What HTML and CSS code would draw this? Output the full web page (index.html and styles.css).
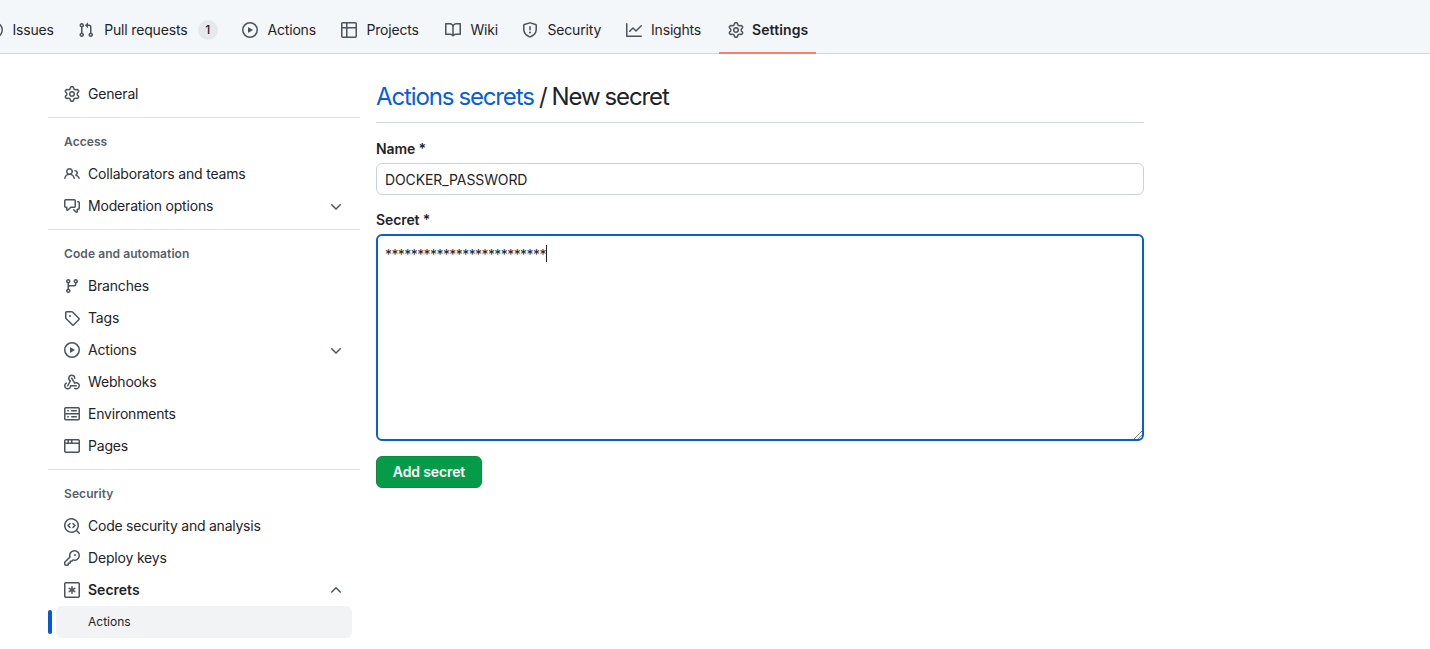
FILE: index.html
```html
<!DOCTYPE html>
<html lang="en">
<head>
<meta charset="utf-8">
<title>Actions secrets / New secret</title>
<link rel="stylesheet" href="styles.css">
</head>
<body>
<svg class="sprite" aria-hidden="true">
  <symbol id="issue" viewBox="0 0 16 16"><path d="M8 9.5a1.5 1.5 0 1 0 0-3 1.5 1.5 0 0 0 0 3Z"/><path d="M8 0a8 8 0 1 1 0 16A8 8 0 0 1 8 0ZM1.5 8a6.5 6.5 0 1 0 13 0 6.5 6.5 0 0 0-13 0Z"/></symbol>
  <symbol id="pull" viewBox="0 0 16 16"><path d="M1.5 3.25a2.25 2.25 0 1 1 3 2.122v5.256a2.251 2.251 0 1 1-1.5 0V5.372A2.25 2.25 0 0 1 1.5 3.25Zm5.677-.177L9.573.677A.25.25 0 0 1 10 .854V2.5h1A2.5 2.5 0 0 1 13.5 5v5.628a2.251 2.251 0 1 1-1.5 0V5a1 1 0 0 0-1-1h-1v1.646a.25.25 0 0 1-.427.177L7.177 3.427a.25.25 0 0 1 0-.354ZM3.75 2.5a.75.75 0 1 0 0 1.5.75.75 0 0 0 0-1.5Zm0 9.5a.75.75 0 1 0 0 1.5.75.75 0 0 0 0-1.5Zm8.25.75a.75.75 0 1 0 1.5 0 .75.75 0 0 0-1.5 0Z"/></symbol>
  <symbol id="play" viewBox="0 0 16 16"><path d="M8 0a8 8 0 1 1 0 16A8 8 0 0 1 8 0ZM1.5 8a6.5 6.5 0 1 0 13 0 6.5 6.5 0 0 0-13 0Zm4.879-2.773 4.264 2.559a.25.25 0 0 1 0 .428l-4.264 2.559A.25.25 0 0 1 6 10.559V5.442a.25.25 0 0 1 .379-.215Z"/></symbol>
  <symbol id="table" viewBox="0 0 16 16"><path d="M0 1.75C0 .784.784 0 1.75 0h12.5C15.216 0 16 .784 16 1.75v12.5A1.75 1.75 0 0 1 14.25 16H1.75A1.75 1.75 0 0 1 0 14.25ZM6.5 6.5v8h7.75a.25.25 0 0 0 .25-.25V6.5Zm8-1.5V1.75a.25.25 0 0 0-.25-.25H6.5V5Zm-13 1.5v7.75c0 .138.112.25.25.25H5v-8ZM5 5V1.5H1.75a.25.25 0 0 0-.25.25V5Z"/></symbol>
  <symbol id="book" viewBox="0 0 16 16"><path d="M0 1.75A.75.75 0 0 1 .75 1h4.253c1.227 0 2.317.59 3 1.501A3.743 3.743 0 0 1 11.006 1h4.245a.75.75 0 0 1 .75.75v10.5a.75.75 0 0 1-.75.75h-4.507a2.25 2.25 0 0 0-1.591.659l-.622.621a.75.75 0 0 1-1.06 0l-.622-.621A2.25 2.25 0 0 0 5.258 13H.75a.75.75 0 0 1-.75-.75Zm7.251 10.324.004-5.073-.002-2.253A2.25 2.25 0 0 0 5.003 2.5H1.5v9h3.757a3.75 3.75 0 0 1 1.994.574ZM8.755 4.75l-.004 7.322a3.752 3.752 0 0 1 1.992-.572H14.5v-9h-3.495a2.25 2.25 0 0 0-2.25 2.25Z"/></symbol>
  <symbol id="shield" viewBox="0 0 16 16"><path d="m8.533.133 5.25 1.68A1.75 1.75 0 0 1 15 3.48V7c0 1.566-.32 3.182-1.303 4.682-.983 1.498-2.585 2.813-5.032 3.855a1.697 1.697 0 0 1-1.33 0c-2.447-1.042-4.049-2.357-5.032-3.855C1.32 10.182 1 8.566 1 7V3.48a1.75 1.75 0 0 1 1.217-1.667l5.25-1.68a1.748 1.748 0 0 1 1.066 0Zm-.61 1.429.001.001-5.25 1.68a.251.251 0 0 0-.174.237V7c0 1.36.275 2.666 1.057 3.859.784 1.194 2.121 2.342 4.366 3.298a.196.196 0 0 0 .154 0c2.245-.957 3.582-2.103 4.366-3.297C13.225 9.666 13.5 8.358 13.5 7V3.48a.25.25 0 0 0-.174-.238l-5.25-1.68a.25.25 0 0 0-.153 0ZM8.75 4.75v3a.75.75 0 0 1-1.5 0v-3a.75.75 0 0 1 1.5 0ZM9 10.5a1 1 0 1 1-2 0 1 1 0 0 1 2 0Z"/></symbol>
  <symbol id="graph" viewBox="0 0 16 16"><path d="M1.5 1.75V13.5h13.75a.75.75 0 0 1 0 1.5H.75a.75.75 0 0 1-.75-.75V1.75a.75.75 0 0 1 1.5 0Zm14.28 2.53-5.25 5.25a.75.75 0 0 1-1.06 0L7 7.06 4.28 9.78a.751.751 0 0 1-1.042-.018.751.751 0 0 1-.018-1.042l3.25-3.25a.75.75 0 0 1 1.06 0L10 7.94l4.72-4.72a.751.751 0 0 1 1.042.018.751.751 0 0 1 .018 1.042Z"/></symbol>
  <symbol id="gear" viewBox="0 0 16 16"><path d="M8 0a8.2 8.2 0 0 1 .701.031C9.444.095 9.99.645 10.16 1.29l.288 1.107c.018.066.079.158.212.224.231.114.454.243.668.386.123.082.233.09.299.071l1.103-.303c.644-.176 1.392.021 1.82.63.27.385.506.792.704 1.218.315.675.111 1.422-.364 1.891l-.814.806c-.049.048-.098.147-.088.294.016.257.016.515 0 .772-.01.147.038.246.088.294l.814.806c.475.469.679 1.216.364 1.891a7.977 7.977 0 0 1-.704 1.217c-.428.61-1.176.807-1.82.63l-1.102-.302c-.067-.019-.177-.011-.3.071a5.909 5.909 0 0 1-.668.386c-.133.066-.194.158-.211.224l-.29 1.106c-.168.646-.715 1.196-1.458 1.26a8.006 8.006 0 0 1-1.402 0c-.743-.064-1.289-.614-1.458-1.26l-.289-1.106c-.018-.066-.079-.158-.212-.224a5.738 5.738 0 0 1-.668-.386c-.123-.082-.233-.09-.299-.071l-1.103.303c-.644.176-1.392-.021-1.82-.63a8.12 8.12 0 0 1-.704-1.218c-.315-.675-.111-1.422.363-1.891l.815-.806c.05-.048.098-.147.088-.294a6.214 6.214 0 0 1 0-.772c.01-.147-.038-.246-.088-.294l-.815-.806C.635 6.045.431 5.298.746 4.623a7.92 7.92 0 0 1 .704-1.217c.428-.61 1.176-.807 1.82-.63l1.102.302c.067.019.177.011.3-.071.214-.143.437-.272.668-.386.133-.066.194-.158.211-.224l.29-1.106C6.009.645 6.556.095 7.299.03 7.53.01 7.764 0 8 0Zm-.571 1.525c-.036.003-.108.036-.137.146l-.289 1.105c-.147.561-.549.967-.998 1.189-.173.086-.34.183-.5.29-.417.278-.97.423-1.529.27l-1.103-.303c-.109-.03-.175.016-.195.045-.22.312-.412.644-.573.99-.014.031-.021.11.059.19l.815.806c.411.406.562.957.53 1.456a4.709 4.709 0 0 0 0 .582c.032.499-.119 1.05-.53 1.456l-.815.806c-.081.08-.073.159-.059.19.162.346.353.677.573.989.02.03.085.076.195.046l1.102-.303c.56-.153 1.113-.008 1.53.27.161.107.328.204.501.29.447.222.85.629.997 1.189l.289 1.105c.029.109.101.143.137.146a6.6 6.6 0 0 0 1.142 0c.036-.003.108-.036.137-.146l.289-1.105c.147-.561.549-.967.998-1.189.173-.086.34-.183.5-.29.417-.278.97-.423 1.529-.27l1.103.303c.109.029.175-.016.195-.045.22-.313.411-.644.573-.99.014-.031.021-.11-.059-.19l-.815-.806c-.411-.406-.562-.957-.53-1.456a4.709 4.709 0 0 0 0-.582c-.032-.499.119-1.05.53-1.456l.815-.806c.081-.08.073-.159.059-.19a6.464 6.464 0 0 0-.573-.989c-.02-.03-.085-.076-.195-.046l-1.102.303c-.56.153-1.113.008-1.53-.27a4.44 4.44 0 0 0-.501-.29c-.447-.222-.85-.629-.997-1.189l-.289-1.105c-.029-.11-.101-.143-.137-.146a6.6 6.6 0 0 0-1.142 0ZM11 8a3 3 0 1 1-6 0 3 3 0 0 1 6 0ZM9.5 8a1.5 1.5 0 1 0-3.001.001A1.5 1.5 0 0 0 9.5 8Z"/></symbol>
  <symbol id="people" viewBox="0 0 16 16"><path d="M2 5.5a3.5 3.5 0 1 1 5.898 2.549 5.508 5.508 0 0 1 3.034 4.084.75.75 0 1 1-1.482.235 4 4 0 0 0-7.9 0 .75.75 0 0 1-1.482-.236A5.507 5.507 0 0 1 3.102 8.05 3.493 3.493 0 0 1 2 5.5ZM11 4a3.001 3.001 0 0 1 2.22 5.018 5.01 5.01 0 0 1 2.56 3.012.749.749 0 0 1-.885.954.752.752 0 0 1-.549-.514 3.507 3.507 0 0 0-2.522-2.372.75.75 0 0 1-.574-.73v-.352a.75.75 0 0 1 .416-.672A1.5 1.5 0 0 0 11 5.5.75.75 0 0 1 11 4Zm-5.5-.5a2 2 0 1 0-.001 3.999A2 2 0 0 0 5.5 3.5Z"/></symbol>
  <symbol id="comments" viewBox="0 0 16 16"><path d="M1.75 1h8.5c.966 0 1.75.784 1.75 1.75v5.5A1.75 1.75 0 0 1 10.25 10H7.061l-2.574 2.573A1.458 1.458 0 0 1 2 11.543V10h-.25A1.75 1.75 0 0 1 0 8.25v-5.5C0 1.784.784 1 1.75 1ZM1.5 2.75v5.5c0 .138.112.25.25.25h1a.75.75 0 0 1 .75.75v2.19l2.72-2.72a.749.749 0 0 1 .53-.22h3.5a.25.25 0 0 0 .25-.25v-5.5a.25.25 0 0 0-.25-.25h-8.5a.25.25 0 0 0-.25.25Zm13 2a.25.25 0 0 0-.25-.25h-.5a.75.75 0 0 1 0-1.5h.5c.966 0 1.75.784 1.75 1.75v5.5A1.75 1.75 0 0 1 14.25 12H14v1.543a1.458 1.458 0 0 1-2.487 1.03L9.22 12.28a.749.749 0 0 1 .326-1.275.749.749 0 0 1 .734.215l2.22 2.22v-2.19a.75.75 0 0 1 .75-.75h1a.25.25 0 0 0 .25-.25Z"/></symbol>
  <symbol id="branch" viewBox="0 0 16 16"><path d="M9.5 3.25a2.25 2.25 0 1 1 3 2.122V6A2.5 2.5 0 0 1 10 8.5H6a1 1 0 0 0-1 1v1.128a2.251 2.251 0 1 1-1.5 0V5.372a2.25 2.25 0 1 1 1.5 0v1.836A2.493 2.493 0 0 1 6 7h4a1 1 0 0 0 1-1v-.628A2.25 2.25 0 0 1 9.5 3.25Zm-6 0a.75.75 0 1 0 1.5 0 .75.75 0 0 0-1.5 0Zm8.25-.75a.75.75 0 1 0 0 1.5.75.75 0 0 0 0-1.5ZM4.25 12a.75.75 0 1 0 0 1.5.75.75 0 0 0 0-1.5Z"/></symbol>
  <symbol id="tag" viewBox="0 0 16 16"><path d="M1 7.775V2.75C1 1.784 1.784 1 2.75 1h5.025c.464 0 .91.184 1.238.513l6.25 6.25a1.75 1.75 0 0 1 0 2.474l-5.026 5.026a1.75 1.75 0 0 1-2.474 0l-6.25-6.25A1.752 1.752 0 0 1 1 7.775Zm1.5 0c0 .066.026.13.073.177l6.25 6.25a.25.25 0 0 0 .354 0l5.025-5.025a.25.25 0 0 0 0-.354l-6.25-6.25a.25.25 0 0 0-.177-.073H2.75a.25.25 0 0 0-.25.25ZM6 5a1 1 0 1 1 0 2 1 1 0 0 1 0-2Z"/></symbol>
  <symbol id="webhook" viewBox="0 0 16 16"><path d="M5.5 4.25a2.25 2.25 0 0 1 4.5 0 .75.75 0 0 0 1.5 0 3.75 3.75 0 1 0-6.14 2.889l-2.272 4.258a.75.75 0 0 0 1.324.706L7 7.25a.75.75 0 0 0-.309-1.015A2.25 2.25 0 0 1 5.5 4.25Z"/><path d="M7.364 3.607a.75.75 0 0 1 1.03.257l2.608 4.349a3.75 3.75 0 1 1-.628 6.785.75.75 0 0 1 .752-1.299 2.25 2.25 0 1 0-.033-3.88.75.75 0 0 1-1.03-.256L7.107 4.636a.75.75 0 0 1 .257-1.03Z"/><path d="M2.9 8.776A.75.75 0 0 1 2.625 9.8 2.25 2.25 0 1 0 6 11.75a.75.75 0 0 1 .75-.751h5.5a.75.75 0 0 1 0 1.5H7.425a3.751 3.751 0 1 1-5.55-3.998.75.75 0 0 1 1.024.274Z"/></symbol>
  <symbol id="server" viewBox="0 0 16 16"><path d="M1.75 1h12.5c.966 0 1.75.784 1.75 1.75v4c0 .372-.116.717-.314 1 .198.283.314.628.314 1v4a1.75 1.75 0 0 1-1.75 1.75H1.75A1.75 1.75 0 0 1 0 12.75v-4c0-.358.109-.707.314-1a1.739 1.739 0 0 1-.314-1v-4C0 1.784.784 1 1.75 1ZM1.5 2.75v4c0 .138.112.25.25.25h12.5a.25.25 0 0 0 .25-.25v-4a.25.25 0 0 0-.25-.25H1.75a.25.25 0 0 0-.25.25Zm.25 5.75a.25.25 0 0 0-.25.25v4c0 .138.112.25.25.25h12.5a.25.25 0 0 0 .25-.25v-4a.25.25 0 0 0-.25-.25ZM7 4.75A.75.75 0 0 1 7.75 4h4.5a.75.75 0 0 1 0 1.5h-4.5A.75.75 0 0 1 7 4.75ZM7.75 10h4.5a.75.75 0 0 1 0 1.5h-4.5a.75.75 0 0 1 0-1.5ZM3 4.75A.75.75 0 0 1 3.75 4h.5a.75.75 0 0 1 0 1.5h-.5A.75.75 0 0 1 3 4.75ZM3.75 10h.5a.75.75 0 0 1 0 1.5h-.5a.75.75 0 0 1 0-1.5Z"/></symbol>
  <symbol id="browser" viewBox="0 0 16 16"><path d="M0 2.75C0 1.784.784 1 1.75 1h12.5c.966 0 1.75.784 1.75 1.75v10.5A1.75 1.75 0 0 1 14.25 15H1.75A1.75 1.75 0 0 1 0 13.25ZM14.5 6h-13v7.25c0 .138.112.25.25.25h12.5a.25.25 0 0 0 .25-.25Zm-6-3.5v2h6V2.75a.25.25 0 0 0-.25-.25ZM5 2.5v2h2v-2Zm-3.25 0a.25.25 0 0 0-.25.25V4.5h2v-2Z"/></symbol>
  <symbol id="codescan" viewBox="0 0 16 16"><path d="M8.47 4.97a.75.75 0 0 0 0 1.06L9.94 7.5 8.47 8.97a.75.75 0 1 0 1.06 1.06l2-2a.75.75 0 0 0 0-1.06l-2-2a.75.75 0 0 0-1.06 0ZM6.53 6.03a.75.75 0 0 0-1.06-1.06l-2 2a.75.75 0 0 0 0 1.06l2 2a.75.75 0 1 0 1.06-1.06L5.06 7.5l1.47-1.47Z"/><path d="M12.246 13.307a7.501 7.501 0 1 1 1.06-1.06l2.474 2.473a.749.749 0 1 1-1.06 1.06ZM1.5 7.5a6.002 6.002 0 0 0 3.608 5.504 6.002 6.002 0 0 0 6.486-1.117.748.748 0 0 1 .292-.293A6 6 0 1 0 1.5 7.5Z"/></symbol>
  <symbol id="key" viewBox="0 0 16 16"><path d="M10.5 0a5.499 5.499 0 1 1-1.288 10.848l-.932.932a.749.749 0 0 1-.53.22H7v.75a.749.749 0 0 1-.22.53l-.5.5a.749.749 0 0 1-.53.22H5v.75a.749.749 0 0 1-.22.53l-.5.5a.749.749 0 0 1-.53.22h-2A1.75 1.75 0 0 1 0 14.25v-2c0-.199.079-.389.22-.53l4.932-4.932A5.5 5.5 0 0 1 10.5 0Zm-4 5.5c-.001.431.069.86.205 1.269a.75.75 0 0 1-.181.768L1.5 12.56v1.69c0 .138.112.25.25.25h1.69l.06-.06v-1.19a.75.75 0 0 1 .75-.75h1.19l.06-.06v-1.19a.75.75 0 0 1 .75-.75h1.19l1.023-1.025a.75.75 0 0 1 .768-.18A4 4 0 1 0 6.5 5.5ZM11 6a1 1 0 1 1 0-2 1 1 0 0 1 0 2Z"/></symbol>
  <symbol id="asterisk" viewBox="0 0 16 16"><path d="M0 1.75C0 .784.784 0 1.75 0h12.5C15.216 0 16 .784 16 1.75v12.5A1.75 1.75 0 0 1 14.25 16H1.75A1.75 1.75 0 0 1 0 14.25Zm1.75-.25a.25.25 0 0 0-.25.25v12.5c0 .138.112.25.25.25h12.5a.25.25 0 0 0 .25-.25V1.75a.25.25 0 0 0-.25-.25ZM8 4a.75.75 0 0 1 .75.75V6.7l1.69-.975a.75.75 0 0 1 .75 1.3L9.5 8l1.69.976a.75.75 0 0 1-.75 1.298L8.75 9.3v1.951a.75.75 0 0 1-1.5 0V9.299l-1.69.976a.75.75 0 0 1-.75-1.3L6.5 8l-1.69-.975a.75.75 0 0 1 .75-1.3l1.69.976V4.75A.75.75 0 0 1 8 4Z"/></symbol>
  <symbol id="down" viewBox="0 0 16 16"><path d="M12.78 5.22a.749.749 0 0 1 0 1.06l-4.25 4.25a.749.749 0 0 1-1.06 0L3.22 6.28a.749.749 0 1 1 1.06-1.06L8 8.939l3.72-3.719a.749.749 0 0 1 1.06 0Z"/></symbol>
  <symbol id="up" viewBox="0 0 16 16"><path d="M3.22 10.53a.749.749 0 0 1 0-1.06l4.25-4.25a.749.749 0 0 1 1.06 0l4.25 4.25a.749.749 0 1 1-1.06 1.06L8 6.811 4.28 10.53a.749.749 0 0 1-1.06 0Z"/></symbol>
</svg>
<header class="topbar">
  <nav class="tabs">
    <a class="tab"><svg class="icon"><use href="#issue"/></svg><span>Issues</span></a>
    <a class="tab tab-counted"><svg class="icon"><use href="#pull"/></svg><span>Pull requests</span><span class="counter">1</span></a>
    <a class="tab"><svg class="icon"><use href="#play"/></svg><span>Actions</span></a>
    <a class="tab"><svg class="icon"><use href="#table"/></svg><span>Projects</span></a>
    <a class="tab"><svg class="icon"><use href="#book"/></svg><span>Wiki</span></a>
    <a class="tab"><svg class="icon"><use href="#shield"/></svg><span>Security</span></a>
    <a class="tab"><svg class="icon"><use href="#graph"/></svg><span>Insights</span></a>
    <a class="tab tab-selected"><svg class="icon"><use href="#gear"/></svg><span>Settings</span></a>
  </nav>
</header>
<div class="layout">
  <aside class="sidebar">
    <section class="group">
      <a class="item"><svg class="icon"><use href="#gear"/></svg><span>General</span></a>
    </section>
    <section class="group">
      <h3 class="group-title">Access</h3>
      <a class="item"><svg class="icon"><use href="#people"/></svg><span>Collaborators and teams</span></a>
      <a class="item"><svg class="icon"><use href="#comments"/></svg><span>Moderation options</span><svg class="icon chevron"><use href="#down"/></svg></a>
    </section>
    <section class="group">
      <h3 class="group-title">Code and automation</h3>
      <a class="item"><svg class="icon"><use href="#branch"/></svg><span>Branches</span></a>
      <a class="item"><svg class="icon"><use href="#tag"/></svg><span>Tags</span></a>
      <a class="item"><svg class="icon"><use href="#play"/></svg><span>Actions</span><svg class="icon chevron"><use href="#down"/></svg></a>
      <a class="item"><svg class="icon"><use href="#webhook"/></svg><span>Webhooks</span></a>
      <a class="item"><svg class="icon"><use href="#server"/></svg><span>Environments</span></a>
      <a class="item"><svg class="icon"><use href="#browser"/></svg><span>Pages</span></a>
    </section>
    <section class="group">
      <h3 class="group-title">Security</h3>
      <a class="item item-long"><svg class="icon"><use href="#codescan"/></svg><span>Code security and analysis</span></a>
      <a class="item"><svg class="icon"><use href="#key"/></svg><span>Deploy keys</span></a>
      <a class="item item-open"><svg class="icon"><use href="#asterisk"/></svg><span>Secrets</span><svg class="icon chevron chevron-up"><use href="#up"/></svg></a>
      <div class="subrow"><span class="marker"></span><a class="subitem subitem-current">Actions</a></div>
      <div class="subrow"><a class="subitem">Dependabot</a></div>
    </section>
  </aside>
  <main class="content">
    <h2 class="title"><a class="title-link">Actions secrets</a> / New secret</h2>
    <div class="label">Name *</div>
    <div class="field">DOCKER_PASSWORD</div>
    <div class="label label-secret">Secret *</div>
    <div class="field field-area"><span class="mask">*************************</span><span class="caret"></span>
      <svg class="grip" viewBox="0 0 8 8"><path d="M0 8L8 0M4 8L8 4"/></svg>
    </div>
    <button class="submit">Add secret</button>
  </main>
</div>
</body>
</html>
```
FILE: styles.css
```css
* { box-sizing: border-box; }
body {
  margin: 0;
  height: 649px;
  overflow: hidden;
  background: #fff;
  color: #1f2328;
  font: 14px/20px Inter, "Liberation Sans", sans-serif;
  letter-spacing: -0.18px;
}
.sprite { display: none; }
.icon { width: 16px; height: 16px; flex: none; fill: #4b535d; }

.topbar {
  height: 54px;
  background: #f3f7fa;
  border-bottom: 1px solid #d0d7e0;
}
.tabs {
  display: grid;
  grid-template-columns: 91px 164px 99px 104px 77px 103.5px 101.9px 96.6px;
  margin-left: -21px;
  height: 54px;
}
.tab {
  display: flex;
  align-items: center;
  gap: 9.5px;
  padding: 6px 0 0 8px;
  white-space: nowrap;
}
.tab-counted { gap: 10.2px; letter-spacing: -0.16px; }
.tab-selected {
  font-weight: 600;
  gap: 8px;
  border-bottom: 2px solid #fd7c68;
  padding: 8px 0 0 8.6px;
  letter-spacing: 0.1px;
}
.counter {
  width: 20px;
  height: 20px;
  border-radius: 10px;
  background: #e5e9ec;
  font-size: 12px;
  font-weight: 500;
  text-align: center;
}

.layout { display: flex; gap: 16px; padding-left: 48px; }
.sidebar { width: 312px; padding-top: 16px; }
.group { padding: 8px 0 7px; border-bottom: 1px solid #e2e5e8; }
.group:last-child { border-bottom: 0; }
.group-title {
  margin: 0;
  padding: 6px 16px;
  height: 32px;
  font-size: 12px;
  font-weight: 600;
  line-height: 19px;
  color: #57606a;
  letter-spacing: 0.08px;
}
.item {
  display: flex;
  align-items: center;
  gap: 8px;
  height: 32px;
  padding: 0 16px;
}
.item-long { letter-spacing: -0.24px; }
.item-open { font-weight: 600; letter-spacing: 0; }
.chevron { margin-left: auto; margin-top: 1px; }
.chevron-up { margin-top: 0; }
.subrow { display: flex; align-items: center; height: 32px; padding-right: 8px; }
.marker { width: 4px; height: 24px; border-radius: 6px; background: #0559d1; }
.subitem {
  flex: 1;
  height: 32px;
  margin-left: 4px;
  padding-left: 32px;
  border-radius: 6px;
  font-size: 12px;
  line-height: 32px;
  letter-spacing: 0;
}
.subrow:last-child { padding-left: 4px; }
.subitem-current { background: #f2f3f5; }

.content { width: 768px; padding-top: 24px; }
.title {
  margin: 0;
  height: 45px;
  border-bottom: 1px solid #d0d7de;
  font-size: 24px;
  font-weight: 400;
  line-height: 38px;
  letter-spacing: -1.13px;
  word-spacing: -0.5px;
}
.title-link { color: #0560d8; }
.label { margin-top: 16px; height: 24px; font-weight: 600; line-height: 20px; letter-spacing: -0.1px; }
.label-secret { margin-top: 15px; }
.field {
  height: 32px;
  padding: 0 8px;
  border: 1px solid #cbd3da;
  border-radius: 6px;
  line-height: 32px;
  letter-spacing: -0.1px;
}
.field-area {
  display: flex;
  position: relative;
  height: 207px;
  padding: 9px 7px;
  border: 2px solid #0860ce;
  line-height: 20px;
}
.mask { letter-spacing: -0.58px; }
.caret { width: 1px; height: 17px; background: #1f2328; }
.grip {
  position: absolute;
  right: 0;
  bottom: 0;
  width: 8px;
  height: 8px;
  fill: none;
  stroke: #555;
  stroke-width: 0.8;
}
.submit {
  display: block;
  width: 106px;
  height: 32px;
  margin-top: 15px;
  padding: 0;
  border: 1px solid #0b8c44;
  border-radius: 6px;
  background: #059b49;
  color: #fff;
  font: 600 14px/20px Inter, "Liberation Sans", sans-serif;
  letter-spacing: -0.13px;
}
```
